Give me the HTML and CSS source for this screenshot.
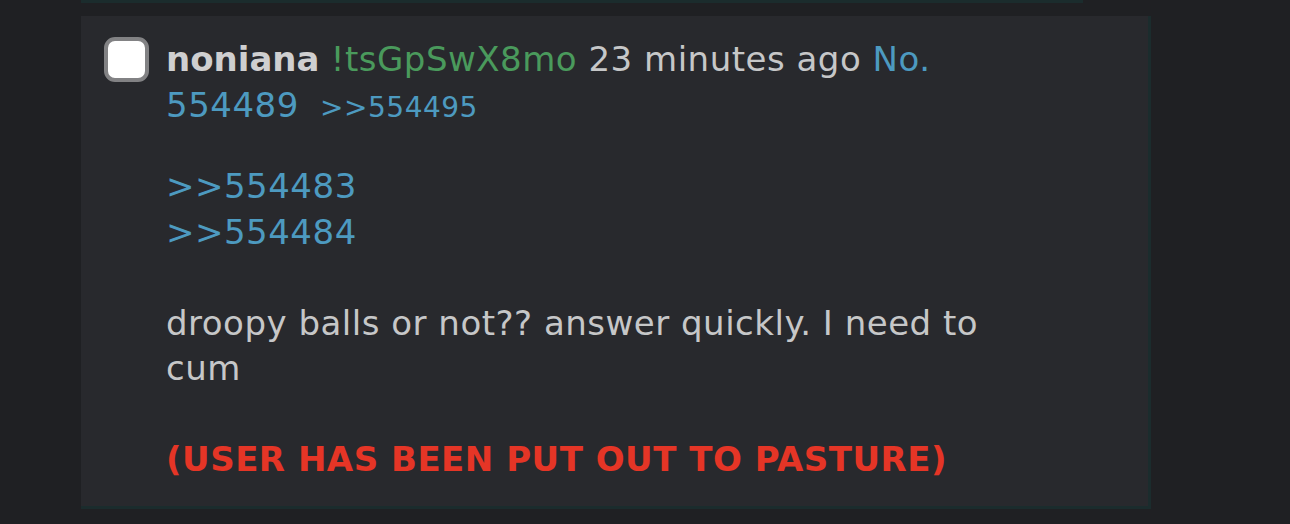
FILE: index.html
```html
<!DOCTYPE html>
<html lang="en">
<head>
    <meta charset="UTF-8">
    <meta name="viewport" content="width=device-width, initial-scale=1.0">
    <title>Thread</title>
    <link rel="stylesheet" href="styles.css">
</head>
<body>
    <div class="thread">
        <div class="post prev"></div>

        <div class="post" id="p554489">
            <div class="side">
                <input type="checkbox" class="check">
            </div>
            <div class="content">
                <div class="info">
                    <span class="name">noniana</span>
                    <span class="trip">!tsGpSwX8mo</span>
                    <span class="date">23 minutes ago</span>
                    <a href="#p554489" class="no">No.</a>
                    <a href="#p554489" class="no">554489</a>
                    <a href="#p554495" class="backlink">&gt;&gt;554495</a>
                </div>
                <blockquote class="message">
                    <a href="#p554483" class="quotelink">&gt;&gt;554483</a><br>
                    <a href="#p554484" class="quotelink">&gt;&gt;554484</a><br>
                    <br>
                    droopy balls or not?? answer quickly. I need to cum<br>
                    <br>
                    <span class="banned">(USER HAS BEEN PUT OUT TO PASTURE)</span>
                </blockquote>
            </div>
        </div>
    </div>
</body>
</html>
```

FILE: styles.css
```css
body {
    margin: 0;
    background-color: #1f2023;
    font-family: "DejaVu Sans", Verdana, sans-serif;
    font-size: 34px;
    line-height: 1.34;
    letter-spacing: 0.5px;
    color: #c6c7c8;
}
a {
    text-decoration: none;
    color: #4d9ac0;
}
.thread {
    padding-left: 81px;
}
.post {
    display: flex;
    width: 1070px;
    margin-bottom: 13px;
    padding: 21px 0 23px 23px;
    box-sizing: border-box;
    background-color: #28292d;
    border-right: 3px solid #1b2c2d;
    border-bottom: 3px solid #1b2c2d;
}
.post.prev {
    width: 1002px;
    height: 3px;
    padding: 0;
    border-right: none;
    background-color: transparent;
}
.side {
    flex: none;
}
.check {
    appearance: none;
    display: block;
    width: 45px;
    height: 45px;
    margin: 0 17px 0 0;
    background-color: #fff;
    border: 4px solid #828284;
    border-radius: 11px;
    box-sizing: border-box;
}
.content {
    width: 850px;
}
.name {
    font-weight: bold;
    letter-spacing: 0;
    color: #cfcfd0;
}
.trip {
    color: #4a9a5c;
}
.backlink {
    font-size: 28px;
    margin-left: 10px;
}
.message {
    margin: 36px 0 0 0;
}
.banned {
    font-weight: bold;
    color: #e53526;
}
```
